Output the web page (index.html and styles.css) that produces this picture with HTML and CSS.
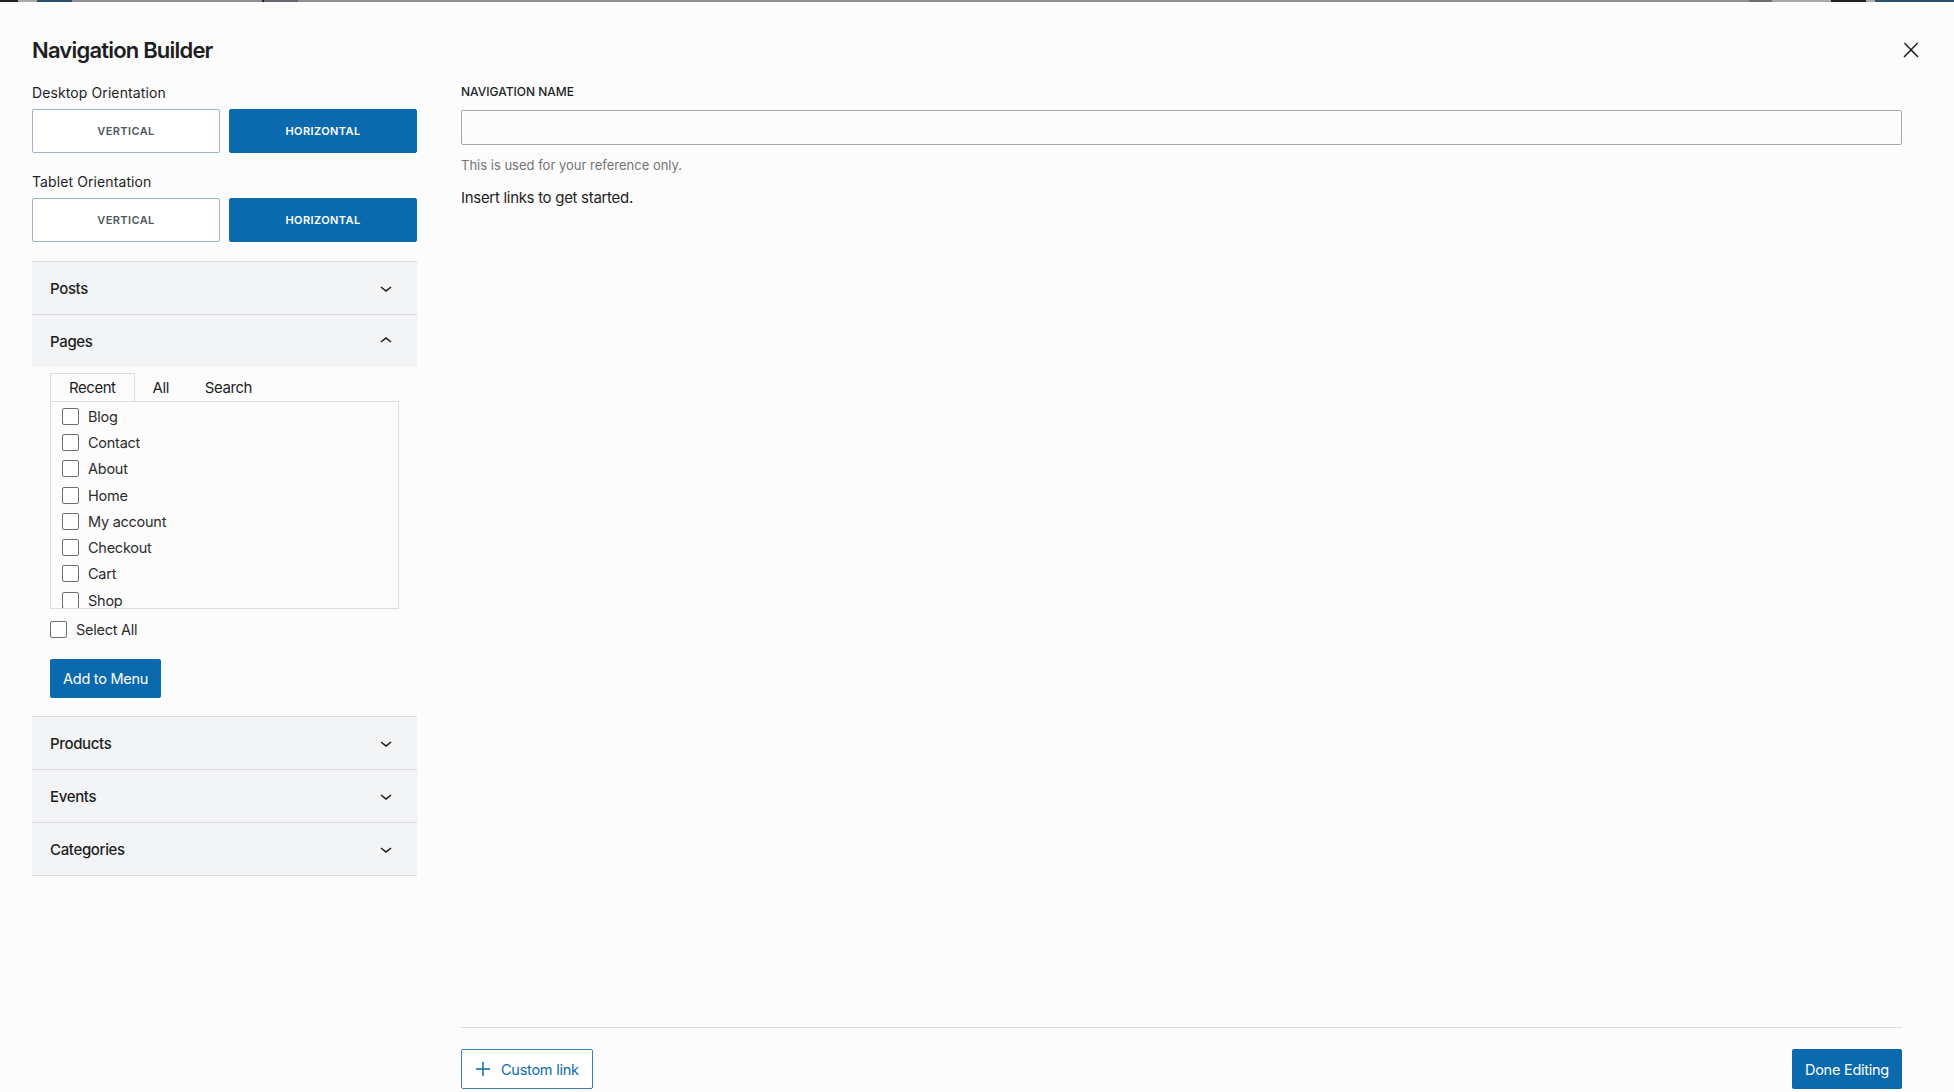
FILE: index.html
```html
<!DOCTYPE html>
<html lang="en">
<head>
    <meta charset="UTF-8">
    <meta name="viewport" content="width=device-width, initial-scale=1.0">
    <title>Navigation Builder</title>
    <link rel="stylesheet" href="styles.css">
</head>
<body>
    <div class="topline"></div>
    <div class="builder">
        <header class="builder-header">
            <h1>Navigation Builder</h1>
            <button class="close-btn" aria-label="Close">
                <svg viewBox="0 0 24 24" width="24" height="24"><path d="M13 11.8l6.1-6.3-1-1-6.1 6.2-6.1-6.2-1 1 6.1 6.3-6.5 6.7 1 1 6.5-6.6 6.5 6.6 1-1z"/></svg>
            </button>
        </header>

        <div class="builder-body">
            <aside class="sidebar">
                <div class="orientation">
                    <div class="orientation-label">Desktop Orientation</div>
                    <div class="toggle-group">
                        <button class="toggle">Vertical</button>
                        <button class="toggle active">Horizontal</button>
                    </div>
                </div>
                <div class="orientation">
                    <div class="orientation-label">Tablet Orientation</div>
                    <div class="toggle-group">
                        <button class="toggle">Vertical</button>
                        <button class="toggle active">Horizontal</button>
                    </div>
                </div>

                <div class="accordion">
                    <div class="acc-item">
                        <button class="acc-header">Posts
                            <svg viewBox="0 0 24 24" width="24" height="24"><path d="M17.5 11.6L12 16l-5.5-4.4.9-1.2L12 14l4.6-3.6z"/></svg>
                        </button>
                    </div>
                    <div class="acc-item open">
                        <button class="acc-header">Pages
                            <svg viewBox="0 0 24 24" width="24" height="24"><path d="M6.5 12.4L12 8l5.5 4.4-.9 1.2L12 10l-4.6 3.6-.9-1.2z"/></svg>
                        </button>
                        <div class="acc-panel">
                            <div class="tabs">
                                <span class="tab active">Recent</span>
                                <span class="tab">All</span>
                                <span class="tab">Search</span>
                            </div>
                            <ul class="page-list">
                                <li><label class="check"><input type="checkbox">Blog</label></li>
                                <li><label class="check"><input type="checkbox">Contact</label></li>
                                <li><label class="check"><input type="checkbox">About</label></li>
                                <li><label class="check"><input type="checkbox">Home</label></li>
                                <li><label class="check"><input type="checkbox">My account</label></li>
                                <li><label class="check"><input type="checkbox">Checkout</label></li>
                                <li><label class="check"><input type="checkbox">Cart</label></li>
                                <li><label class="check"><input type="checkbox">Shop</label></li>
                            </ul>
                            <label class="check select-all"><input type="checkbox">Select All</label>
                            <button class="btn-primary">Add to Menu</button>
                        </div>
                    </div>
                    <div class="acc-item">
                        <button class="acc-header">Products
                            <svg viewBox="0 0 24 24" width="24" height="24"><path d="M17.5 11.6L12 16l-5.5-4.4.9-1.2L12 14l4.6-3.6z"/></svg>
                        </button>
                    </div>
                    <div class="acc-item">
                        <button class="acc-header">Events
                            <svg viewBox="0 0 24 24" width="24" height="24"><path d="M17.5 11.6L12 16l-5.5-4.4.9-1.2L12 14l4.6-3.6z"/></svg>
                        </button>
                    </div>
                    <div class="acc-item">
                        <button class="acc-header">Categories
                            <svg viewBox="0 0 24 24" width="24" height="24"><path d="M17.5 11.6L12 16l-5.5-4.4.9-1.2L12 14l4.6-3.6z"/></svg>
                        </button>
                    </div>
                </div>
            </aside>

            <main class="editor">
                <label class="field-label" for="navName">Navigation Name</label>
                <input class="field-input" id="navName" type="text">
                <p class="help">This is used for your reference only.</p>
                <p class="empty">Insert links to get started.</p>

                <footer class="editor-footer">
                    <button class="btn-outline">
                        <svg viewBox="0 0 24 24" width="24" height="24"><path d="M11.25 5h1.5v6.25H19v1.5h-6.25V19h-1.5v-6.25H5v-1.5h6.25z"/></svg>
                        Custom link
                    </button>
                    <button class="btn-primary">Done Editing</button>
                </footer>
            </main>
        </div>
    </div>
</body>
</html>
```

FILE: styles.css
```css
* {
    box-sizing: border-box;
}
body {
    margin: 0;
    background: #fcfcfc;
    color: #1e1e1e;
    font-family: Inter, "Noto Sans", sans-serif;
    overflow: hidden;
}
button {
    font-family: inherit;
}
.topline {
    height: 2px;
    background: linear-gradient(to right,
        #1d2327 0 18px, #a7aaad 18px 37px, #2c4f6e 37px 72px,
        #8c8f94 72px 262px, #1d2327 262px 264px, #646970 264px 298px,
        #8c8f94 298px 1749px, #6b6e73 1749px 1772px, #a7aaad 1772px 1831px,
        #1d2327 1831px 1866px, #a7aaad 1866px 1875px, #2c4f6e 1875px);
}
.builder {
    height: calc(100vh - 2px);
    display: flex;
    flex-direction: column;
    padding: 0 0 3px 32px;
}
.builder-header {
    display: flex;
    align-items: center;
    justify-content: space-between;
    padding-top: 34px;
    padding-right: 31px;
}
h1 {
    margin: 0;
    font-size: 22px;
    line-height: 28px;
    font-weight: 600;
    letter-spacing: -0.8px;
}
.close-btn {
    border: none;
    background: none;
    padding: 0;
    width: 24px;
    height: 24px;
    cursor: pointer;
}
.close-btn svg {
    fill: #1e1e1e;
    display: block;
}
.builder-body {
    flex: 1;
    display: flex;
    gap: 44px;
    margin-top: 19px;
    min-height: 0;
}

/* left column */
.sidebar {
    width: 385px;
    flex-shrink: 0;
}
.orientation + .orientation {
    margin-top: 19px;
}
.orientation-label {
    font-size: 14px;
    line-height: 20px;
    letter-spacing: 0.1px;
    margin-bottom: 6px;
}
.toggle-group {
    display: grid;
    grid-template-columns: 1fr 1fr;
    gap: 9px;
}
.toggle {
    height: 44px;
    border: 1px solid #9fb3ca;
    border-radius: 2px;
    background: #fff;
    color: #50575e;
    font-size: 11px;
    font-weight: 600;
    letter-spacing: 0.4px;
    text-transform: uppercase;
    cursor: pointer;
}
.toggle.active {
    background: #0b6aad;
    border-color: #0b6aad;
    color: #fff;
}
.accordion {
    margin-top: 19px;
    border-bottom: 1px solid #dcdcde;
}
.acc-item {
    border-top: 1px solid #dcdcde;
}
.acc-header {
    width: 100%;
    height: 52px;
    display: flex;
    align-items: center;
    justify-content: space-between;
    padding: 0 19px 0 18px;
    border: none;
    background: #f3f4f5;
    color: #1e1e1e;
    font-size: 15px;
    font-weight: 500;
    letter-spacing: -0.35px;
    cursor: pointer;
}
.acc-header svg {
    fill: #1e1e1e;
}
.acc-panel {
    padding: 6px 18px 18px;
}
.tabs {
    display: flex;
    height: 28px;
}
.tab {
    display: flex;
    align-items: center;
    padding: 0 17px;
    font-size: 15px;
    letter-spacing: -0.45px;
    border: 1px solid transparent;
    border-bottom: none;
}
.tab.active {
    padding: 0 18px;
    border-color: #dcdcde;
}
.page-list {
    list-style: none;
    margin: 0;
    padding: 1px 11px;
    height: 208px;
    overflow: hidden;
    border: 1px solid #dcdcde;
}
.page-list li {
    height: 26.3px;
    display: flex;
    align-items: center;
}
.check {
    display: flex;
    align-items: center;
    gap: 9px;
    font-size: 14.5px;
    letter-spacing: -0.25px;
    color: #2c2c2c;
}
.check input {
    appearance: none;
    margin: 0;
    width: 17px;
    height: 17px;
    border: 1.5px solid #6e6e6e;
    border-radius: 2px;
    background: #fff;
}
.select-all {
    margin-top: 12px;
    height: 17px;
}
.acc-panel .btn-primary {
    margin-top: 21px;
    height: 39px;
}
.btn-primary {
    height: 40px;
    padding: 0 13px;
    border: none;
    border-radius: 2px;
    background: #0b6aad;
    color: #fff;
    font-size: 14.5px;
    letter-spacing: -0.25px;
    cursor: pointer;
}

/* right column */
.editor {
    flex: 1;
    display: flex;
    flex-direction: column;
    padding-right: 52px;
    padding-top: 1px;
}
.field-label {
    font-size: 12px;
    line-height: 16px;
    font-weight: 500;
    text-transform: uppercase;
}
.field-input {
    margin-top: 10px;
    height: 35px;
    border: 1px solid #a8a8a8;
    border-radius: 2px;
    background: #fcfcfc;
    font-size: 15px;
}
.help {
    margin: 11px 0 0;
    font-size: 13px;
    line-height: 18px;
    color: #757575;
}
.empty {
    margin: 14px 0 0;
    font-size: 15px;
    line-height: 20px;
    letter-spacing: -0.3px;
}
.editor-footer {
    margin-top: auto;
    border-top: 1px solid #dedede;
    padding-top: 21px;
    display: flex;
    justify-content: space-between;
}
.btn-outline {
    height: 40px;
    display: flex;
    align-items: center;
    gap: 6px;
    padding: 0 13px 0 9px;
    border: 1px solid #3a80bd;
    border-radius: 2px;
    background: #fff;
    color: #0b6aad;
    font-size: 14.5px;
    letter-spacing: -0.25px;
    cursor: pointer;
}
.btn-outline svg {
    fill: #0b6aad;
}
```
